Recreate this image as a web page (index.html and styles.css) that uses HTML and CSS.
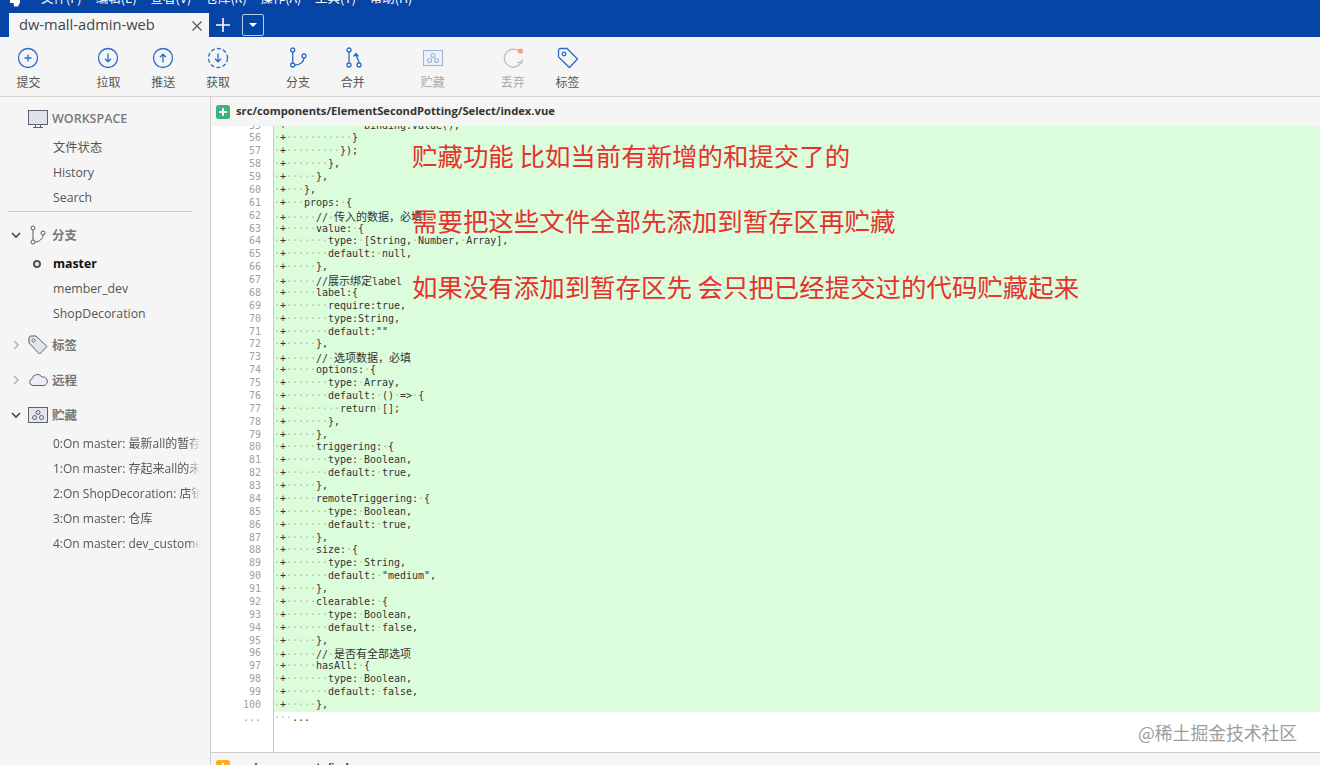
FILE: index.html
```html
<!DOCTYPE html>
<html lang="zh">
<head>
<meta charset="utf-8">
<title>dw-mall-admin-web</title>
<link rel="stylesheet" href="styles.css">
</head>
<body>
<div class="app">
  <header class="titlebar">
    <div class="menubar">
      <svg class="logo" width="12" height="8" viewBox="0 0 12 8"><path d="M1 0h10v2.500L9 6.500H5L4.500 3H1z" fill="#fff"/></svg>
      <span class="menu">文件(F)</span><span class="menu">编辑(E)</span><span class="menu">查看(V)</span><span class="menu">仓库(R)</span><span class="menu">操作(A)</span><span class="menu">工具(T)</span><span class="menu">帮助(H)</span>
    </div>
    <div class="tabrow">
      <div class="tab"><span class="tab-name">dw-mall-admin-web</span>
        <svg class="tab-close" width="10" height="10" viewBox="0 0 10 10"><path d="M.5.5l9 9M9.5.5l-9 9" stroke="#555" stroke-width="1.2"/></svg>
      </div>
      <svg class="tab-add" width="16" height="16" viewBox="0 0 16 16"><path d="M8 1v14M1 8h14" stroke="#fff" stroke-width="1.6"/></svg>
      <div class="tab-drop"><span class="tri"></span></div>
    </div>
  </header>

  <nav class="toolbar">
    <div class="tool"><svg width="24" height="24" viewBox="0 0 24 24" class="ic"><circle cx="12" cy="12" r="9.5"/><path d="M12 8.5v7M8.5 12h7"/></svg><span>提交</span></div>
    <div class="tool wide"><svg width="24" height="24" viewBox="0 0 24 24" class="ic"><circle cx="12" cy="12" r="9.5"/><path d="M12 7.5v8M9 12.8l3 3 3-3"/></svg><span>拉取</span></div>
    <div class="tool"><svg width="24" height="24" viewBox="0 0 24 24" class="ic"><circle cx="12" cy="12" r="9.5"/><path d="M12 16.5v-8M9 11.2l3-3 3 3"/></svg><span>推送</span></div>
    <div class="tool"><svg width="24" height="24" viewBox="0 0 24 24" class="ic"><circle cx="12" cy="12" r="9.5" stroke-dasharray="4 2.2"/><path d="M12 7.5v8M9 12.8l3 3 3-3"/></svg><span>获取</span></div>
    <div class="tool wide"><svg width="24" height="24" viewBox="0 0 24 24" class="ic"><circle cx="6.7" cy="4" r="2"/><circle cx="6.7" cy="19" r="2"/><circle cx="18" cy="10" r="2"/><path d="M6.7 6v11M18 12c0 4-4 7-9.3 7"/></svg><span>分支</span></div>
    <div class="tool"><svg width="24" height="24" viewBox="0 0 24 24" class="ic"><circle cx="8" cy="4" r="2"/><circle cx="8" cy="19" r="2"/><circle cx="18" cy="19" r="2"/><path d="M8 6v11M18 17c0-4-3-5-3-9.500M12.500 10.500L15 7.500l2.500 3"/></svg><span>合并</span></div>
    <div class="tool wide off"><svg width="24" height="24" viewBox="0 0 24 24" class="ic-stash"><rect x="2.500" y="4.500" width="19" height="15" fill="#eef2f8"/><circle cx="12" cy="9.500" r="2"/><circle cx="8.500" cy="14.500" r="2"/><circle cx="15.500" cy="14.500" r="2"/></svg><span>贮藏</span></div>
    <div class="tool wide off"><svg width="24" height="24" viewBox="0 0 24 24" class="ic-discard"><path d="M17 4.500A9 9 0 1 0 20.500 16"/><path d="M16.500 16.500h4.500v-3"/><circle cx="19.500" cy="5" r="2.600" fill="#f59c8c" stroke="none"/></svg><span>丢弃</span></div>
    <div class="tool"><svg width="24" height="24" viewBox="0 0 24 24" class="ic"><path d="M2.500 4.500a2 2 0 0 1 2-2h6.500l10.500 10.500-8 8.500L2.500 11z"/><circle cx="8" cy="8" r="1.800"/></svg><span>标签</span></div>
  </nav>

  <main class="main">
    <aside class="sidebar">
      <div class="head first">
        <svg class="head-ic" width="20" height="20" viewBox="0 0 20 20"><rect x=".5" y="1.500" width="19" height="14" fill="#dfe2ea" stroke="#5b6170"/><path d="M5 18.500h10M7.500 16v2.500M12.500 16v2.500" stroke="#5b6170" fill="none"/></svg>
        <span class="head-cap">WORKSPACE</span>
      </div>
      <div class="item">文件状态</div>
      <div class="item">History</div>
      <div class="item">Search</div>
      <hr class="divider">
      <div class="head">
        <svg class="chev" width="10" height="10" viewBox="0 0 10 10"><path d="M1 3l4 4 4-4" class="chev-open"/></svg>
        <svg class="head-ic" width="18" height="20" viewBox="0 0 18 20"><g fill="none" stroke="#555b68"><circle cx="4" cy="3" r="2"/><circle cx="4" cy="17" r="2"/><circle cx="14" cy="8" r="2"/><path d="M4 5v10M14 10c0 4-4 7-8 7"/></g></svg>
        <span class="head-title">分支</span>
      </div>
      <div class="item current"><span class="dot"></span>master</div>
      <div class="item">member_dev</div>
      <div class="item">ShopDecoration</div>
      <div class="head gap">
        <svg class="chev" width="10" height="10" viewBox="0 0 10 10"><path d="M3 1l4 4-4 4" class="chev-closed"/></svg>
        <svg class="head-ic" width="20" height="20" viewBox="0 0 20 20"><path d="M1 3a2 2 0 0 1 2-2h5l11 10.500-7.500 7.500L1 8z" fill="#e3e5ec" stroke="#5b6170"/><circle cx="5.500" cy="5.500" r="1.500" fill="#fff" stroke="#5b6170"/></svg>
        <span class="head-title">标签</span>
      </div>
      <div class="head gap">
        <svg class="chev" width="10" height="10" viewBox="0 0 10 10"><path d="M3 1l4 4-4 4" class="chev-closed"/></svg>
        <svg class="head-ic" width="20" height="20" viewBox="0 0 20 20"><path d="M5 15.500a3.500 3.500 0 0 1-1-6.800A5.500 5.500 0 0 1 14 7a4.300 4.300 0 0 1 2 8.500z" fill="#eceef3" stroke="#5b6170"/></svg>
        <span class="head-title">远程</span>
      </div>
      <div class="head gap">
        <svg class="chev" width="10" height="10" viewBox="0 0 10 10"><path d="M1 3l4 4 4-4" class="chev-open"/></svg>
        <svg class="head-ic" width="20" height="20" viewBox="0 0 20 20"><rect x=".5" y="2.500" width="19" height="15" fill="#e3e5f0" stroke="#5b6170"/><g fill="none" stroke="#5b6170"><circle cx="10" cy="7.500" r="2"/><circle cx="6.500" cy="12.500" r="2"/><circle cx="13.500" cy="12.500" r="2"/></g></svg>
        <span class="head-title">贮藏</span>
      </div>
      <div class="item stash"><span class="clip">0:On master: 最新all的暂存区内容</span></div>
      <div class="item stash"><span class="clip">1:On master: 存起来all的未提交代码</span></div>
      <div class="item stash"><span class="clip">2:On ShopDecoration: 店铺装修</span></div>
      <div class="item stash"><span class="clip">3:On master: 仓库</span></div>
      <div class="item stash"><span class="clip">4:On master: dev_customer</span></div>
    </aside>

    <section class="content">
      <div class="file-head">
        <svg width="14" height="14" viewBox="0 0 14 14"><rect width="14" height="14" rx="2.500" fill="#3cb37c"/><path d="M7 3.200v7.600M3.200 7h7.600" stroke="#fff" stroke-width="2"/></svg>
        <span>src/components/ElementSecondPotting/Select/index.vue</span>
      </div>
      <div class="diff">
        <div class="rows">
          <div class="row"><span class="num">55</span><span class="code"><i>·</i>+<i>·············</i>binding.value();</span></div>
          <div class="row"><span class="num">56</span><span class="code"><i>·</i>+<i>···········</i>}</span></div>
          <div class="row"><span class="num">57</span><span class="code"><i>·</i>+<i>·········</i>});</span></div>
          <div class="row"><span class="num">58</span><span class="code"><i>·</i>+<i>·······</i>},</span></div>
          <div class="row"><span class="num">59</span><span class="code"><i>·</i>+<i>·····</i>},</span></div>
          <div class="row"><span class="num">60</span><span class="code"><i>·</i>+<i>···</i>},</span></div>
          <div class="row"><span class="num">61</span><span class="code"><i>·</i>+<i>···</i>props:<i>·</i>{</span></div>
          <div class="row"><span class="num">62</span><span class="code"><i>·</i>+<i>·····</i>//<i>·</i><b>传入的数据，必填</b></span></div>
          <div class="row"><span class="num">63</span><span class="code"><i>·</i>+<i>·····</i>value:<i>·</i>{</span></div>
          <div class="row"><span class="num">64</span><span class="code"><i>·</i>+<i>·······</i>type:<i>·</i>[String,<i>·</i>Number,<i>·</i>Array],</span></div>
          <div class="row"><span class="num">65</span><span class="code"><i>·</i>+<i>·······</i>default:<i>·</i>null,</span></div>
          <div class="row"><span class="num">66</span><span class="code"><i>·</i>+<i>·····</i>},</span></div>
          <div class="row"><span class="num">67</span><span class="code"><i>·</i>+<i>·····</i>//<b>展示绑定</b>label</span></div>
          <div class="row"><span class="num">68</span><span class="code"><i>·</i>+<i>·····</i>label:{</span></div>
          <div class="row"><span class="num">69</span><span class="code"><i>·</i>+<i>·······</i>require:true,</span></div>
          <div class="row"><span class="num">70</span><span class="code"><i>·</i>+<i>·······</i>type:String,</span></div>
          <div class="row"><span class="num">71</span><span class="code"><i>·</i>+<i>·······</i>default:""</span></div>
          <div class="row"><span class="num">72</span><span class="code"><i>·</i>+<i>·····</i>},</span></div>
          <div class="row"><span class="num">73</span><span class="code"><i>·</i>+<i>·····</i>//<i>·</i><b>选项数据，必填</b></span></div>
          <div class="row"><span class="num">74</span><span class="code"><i>·</i>+<i>·····</i>options:<i>·</i>{</span></div>
          <div class="row"><span class="num">75</span><span class="code"><i>·</i>+<i>·······</i>type:<i>·</i>Array,</span></div>
          <div class="row"><span class="num">76</span><span class="code"><i>·</i>+<i>·······</i>default:<i>·</i>()<i>·</i>=&gt;<i>·</i>{</span></div>
          <div class="row"><span class="num">77</span><span class="code"><i>·</i>+<i>·········</i>return<i>·</i>[];</span></div>
          <div class="row"><span class="num">78</span><span class="code"><i>·</i>+<i>·······</i>},</span></div>
          <div class="row"><span class="num">79</span><span class="code"><i>·</i>+<i>·····</i>},</span></div>
          <div class="row"><span class="num">80</span><span class="code"><i>·</i>+<i>·····</i>triggering:<i>·</i>{</span></div>
          <div class="row"><span class="num">81</span><span class="code"><i>·</i>+<i>·······</i>type:<i>·</i>Boolean,</span></div>
          <div class="row"><span class="num">82</span><span class="code"><i>·</i>+<i>·······</i>default:<i>·</i>true,</span></div>
          <div class="row"><span class="num">83</span><span class="code"><i>·</i>+<i>·····</i>},</span></div>
          <div class="row"><span class="num">84</span><span class="code"><i>·</i>+<i>·····</i>remoteTriggering:<i>·</i>{</span></div>
          <div class="row"><span class="num">85</span><span class="code"><i>·</i>+<i>·······</i>type:<i>·</i>Boolean,</span></div>
          <div class="row"><span class="num">86</span><span class="code"><i>·</i>+<i>·······</i>default:<i>·</i>true,</span></div>
          <div class="row"><span class="num">87</span><span class="code"><i>·</i>+<i>·····</i>},</span></div>
          <div class="row"><span class="num">88</span><span class="code"><i>·</i>+<i>·····</i>size:<i>·</i>{</span></div>
          <div class="row"><span class="num">89</span><span class="code"><i>·</i>+<i>·······</i>type:<i>·</i>String,</span></div>
          <div class="row"><span class="num">90</span><span class="code"><i>·</i>+<i>·······</i>default:<i>·</i>"medium",</span></div>
          <div class="row"><span class="num">91</span><span class="code"><i>·</i>+<i>·····</i>},</span></div>
          <div class="row"><span class="num">92</span><span class="code"><i>·</i>+<i>·····</i>clearable:<i>·</i>{</span></div>
          <div class="row"><span class="num">93</span><span class="code"><i>·</i>+<i>·······</i>type:<i>·</i>Boolean,</span></div>
          <div class="row"><span class="num">94</span><span class="code"><i>·</i>+<i>·······</i>default:<i>·</i>false,</span></div>
          <div class="row"><span class="num">95</span><span class="code"><i>·</i>+<i>·····</i>},</span></div>
          <div class="row"><span class="num">96</span><span class="code"><i>·</i>+<i>·····</i>//<i>·</i><b>是否有全部选项</b></span></div>
          <div class="row"><span class="num">97</span><span class="code"><i>·</i>+<i>·····</i>hasAll:<i>·</i>{</span></div>
          <div class="row"><span class="num">98</span><span class="code"><i>·</i>+<i>·······</i>type:<i>·</i>Boolean,</span></div>
          <div class="row"><span class="num">99</span><span class="code"><i>·</i>+<i>·······</i>default:<i>·</i>false,</span></div>
          <div class="row"><span class="num">100</span><span class="code"><i>·</i>+<i>·····</i>},</span></div>
          <div class="row plain"><span class="num">...</span><span class="code"><i>···</i>...</span></div>
        </div>
      </div>
      <div class="file-head next">
        <svg width="14" height="14" viewBox="0 0 14 14"><rect width="14" height="14" rx="2.500" fill="#f5b21c"/><path d="M7 3v8M3 7h8" stroke="#fff" stroke-width="2"/></svg>
        <span>src/components/index.vue</span>
      </div>
      <p class="note n1">贮藏功能 比如当前有新增的和提交了的</p>
      <p class="note n2">需要把这些文件全部先添加到暂存区再贮藏</p>
      <p class="note n3">如果没有添加到暂存区先 会只把已经提交过的代码贮藏起来</p>
      <p class="mark">@稀土掘金技术社区</p>
    </section>
  </main>
</div>
</body>
</html>
```
FILE: styles.css
```css
* { box-sizing: border-box; }
html, body { margin: 0; height: 100%; overflow: hidden; }
body { font-family: "Open Sans", "Noto Sans CJK SC", sans-serif; background: #f5f5f5; color: #444; }
.app { display: flex; flex-direction: column; width: 1320px; height: 765px; overflow: hidden; }

/* title bar */
.titlebar { height: 37px; flex: none; background: #0645a6; overflow: hidden; }
.menubar { height: 13px; display: flex; overflow: hidden; padding-left: 9px; position: relative; }
.logo { flex: none; width: 12px; height: 8px; margin-right: 20px; }
.menu { flex: none; width: 54.800px; margin-top: -10px; line-height: 16px; font-size: 12.500px; color: #fff; font-family: "Noto Sans CJK SC", sans-serif; }
.tabrow { height: 24px; display: flex; align-items: center; padding-left: 9px; }
.tab { width: 200px; height: 24px; background: #f5f5f5; display: flex; align-items: center; justify-content: space-between; padding: 0 7px 0 10px; }
.tab-name { font-size: 14.700px; color: #444; line-height: 22px; margin-top: -2px; }
.tab-close { margin-top: 2px; }
.tab-add { margin-left: 6px; }
.tab-drop { margin-left: 11px; width: 22px; height: 22px; border: 1px solid #b8cdea; border-radius: 2px; display: flex; align-items: center; justify-content: center; }
.tri { width: 0; height: 0; border: 4px solid transparent; border-top-color: #fff; border-bottom: 0; }

/* tool bar */
.toolbar { height: 60px; flex: none; display: flex; padding-left: 1px; padding-top: 9px; border-bottom: 1px solid #d2d2d2; background: #f5f5f5; }
.tool { width: 54.800px; display: flex; flex-direction: column; align-items: center; font-size: 12px; line-height: 16px; color: #555; font-family: "Noto Sans CJK SC", sans-serif; }
.tool span { margin-top: 4px; }
.tool.wide { margin-left: 25.200px; }
.tool.off { color: #aaa; }
.ic { fill: none; stroke: #2a6cc6; stroke-width: 1.300; }
.ic-stash { fill: none; stroke: #9db7dc; stroke-width: 1.100; }
.ic-discard { fill: none; stroke: #bdbdbd; stroke-width: 1.300; }

/* main */
.main { flex: 1; display: flex; min-height: 0; }
.sidebar { width: 211px; flex: none; border-right: 1px solid #cfcfcf; padding-top: 9px; background: #f5f5f5; font-size: 12.300px; }
.head { height: 25px; display: flex; align-items: center; padding-left: 28px; position: relative; }
.head.first { margin-bottom: 4px; }
.head.gap { margin-top: 6px; }
.head.gap + .head.gap { margin-top: 10px; }
.head + .item { margin-top: 4px; }
.head.first + .item { margin-top: 0; }
.head-ic { flex: none; margin-right: 4px; }
.head-cap { font-size: 12.500px; font-weight: 600; color: #7a7a7a; }
.head-title { font-size: 12.500px; font-weight: 700; color: #777; font-family: "Noto Sans CJK SC", sans-serif; }
.head .head-ic[width="18"] { margin-left: 1px; margin-right: 5px; }
.chev { position: absolute; left: 11px; top: 8px; fill: none; stroke-width: 1.600; }
.chev-open { stroke: #444; }
.chev-closed { stroke: #b4b4b4; }
.item { height: 25px; line-height: 25px; padding-left: 53px; color: #555; white-space: nowrap; position: relative; }
.divider { margin: 1px 18px 10px 8px; border: 0; border-top: 1px solid #cdcdcd; height: 0; }
.item.current { font-weight: 700; color: #111; }
.dot { position: absolute; left: 33px; top: 8.500px; width: 8px; height: 8px; border: 2px solid #555; border-radius: 50%; }
.stash { font-size: 12px; }
.clip { display: block; width: 147px; overflow: hidden; -webkit-mask-image: linear-gradient(to right, #000 92%, transparent); mask-image: linear-gradient(to right, #000 92%, transparent); }

/* content */
.content { flex: 1; min-width: 0; display: flex; flex-direction: column; position: relative; background: #fff; }
.file-head { height: 29px; flex: none; display: flex; align-items: center; gap: 6px; padding-left: 5px; background: #f5f5f5; font-size: 11.200px; font-weight: 700; color: #333; }
.file-head span { margin-top: -2px; }
.diff { height: 626px; flex: none; overflow: hidden; position: relative; }
.diff::before { content: ""; position: absolute; left: 62px; top: 0; bottom: 0; border-left: 1px solid #c8c8c8; }
.rows { margin-top: -6.500px; }
.row { height: 12.880px; line-height: 12.880px; display: flex; font-family: "DejaVu Sans Mono", "Noto Sans CJK SC", monospace; font-size: 10px; white-space: pre; color: #333; }
.num { width: 63px; flex: none; padding-right: 13px; text-align: right; color: #a0a0a0; }
.code { flex: 1; background: #dcfddc; letter-spacing: -0.020px; }
.plain .code { background: none; }
.code i { font-style: normal; color: #a6bda6; }
.plain .code i { color: #bbb; }
.code b { font-weight: 400; font-size: 11px; font-family: "Noto Sans CJK SC", sans-serif; }
.file-head.next { border-top: 1px solid #cfcfcf; padding-top: 7px; align-items: flex-start; height: 30px; }
.file-head.next span { margin-top: -1px; }
.note { position: absolute; left: 201px; margin: 0; font-family: "Noto Sans CJK SC", sans-serif; font-size: 25.450px; line-height: 34px; color: #e5322d; white-space: nowrap; }
.n1 { top: 41px; }
.n2 { top: 106px; }
.n3 { top: 172px; }
.mark { position: absolute; left: 927px; top: 622px; margin: 0; font-family: "Noto Sans CJK SC", sans-serif; font-size: 17.800px; line-height: 26px; color: #9c9c9c; white-space: nowrap; }
```
